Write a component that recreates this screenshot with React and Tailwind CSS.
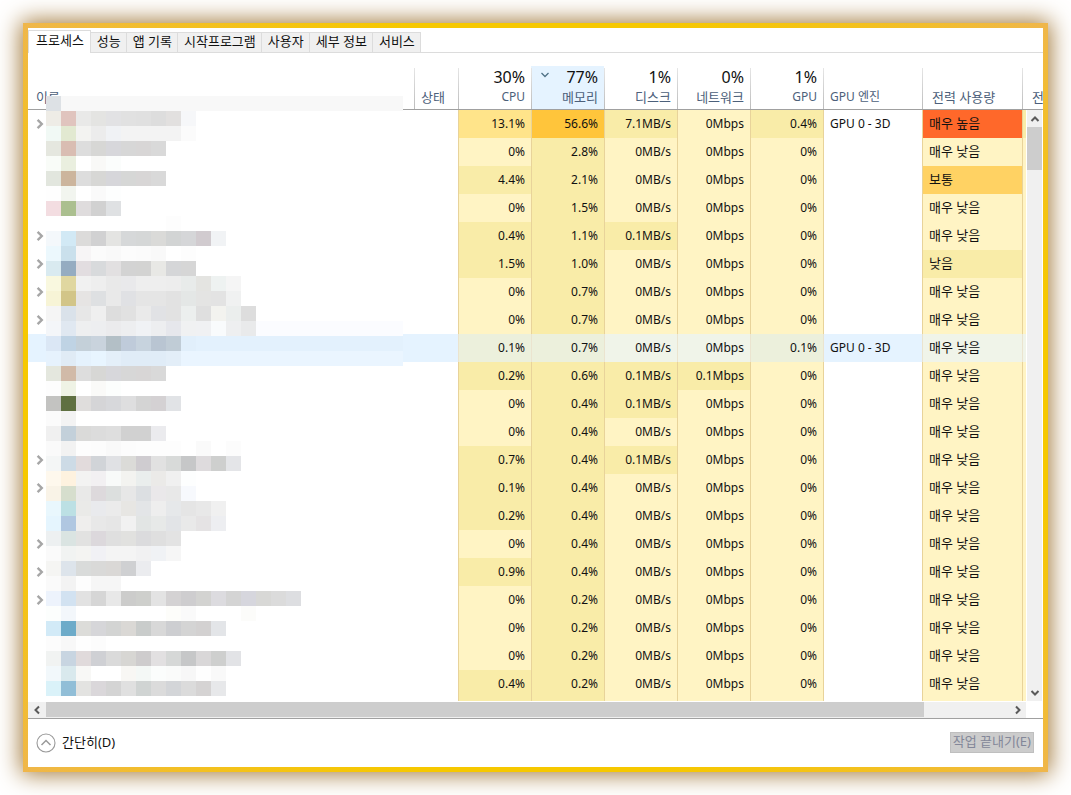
import React from "react";

const TABS = ["프로세스", "성능", "앱 기록", "시작프로그램", "사용자", "세부 정보", "서비스"];

const LEVEL = {
  0: "bg-[#fff4c4]",
  1: "bg-[#f9eca8]",
  2: "bg-[#ffe48a]",
  3: "bg-[#ffc53b]",
  4: "bg-[#ffd263]",
  5: "bg-[#ff682a]",
};
const SELECTED_LEVEL = { 0: "bg-[#f0f4e9]", 1: "bg-[#ecf0dc]" };

// cpu, memory, disk, network, gpu, engine, power, expandable
const ROWS = [
  ["13.1%", "56.6%", "7.1MB/s", "0Mbps", "0.4%", "GPU 0 - 3D", "매우 높음", true],
  ["0%", "2.8%", "0MB/s", "0Mbps", "0%", "", "매우 낮음", false],
  ["4.4%", "2.1%", "0MB/s", "0Mbps", "0%", "", "보통", false],
  ["0%", "1.5%", "0MB/s", "0Mbps", "0%", "", "매우 낮음", false],
  ["0.4%", "1.1%", "0.1MB/s", "0Mbps", "0%", "", "매우 낮음", true],
  ["1.5%", "1.0%", "0MB/s", "0Mbps", "0%", "", "낮음", true],
  ["0%", "0.7%", "0MB/s", "0Mbps", "0%", "", "매우 낮음", true],
  ["0%", "0.7%", "0MB/s", "0Mbps", "0%", "", "매우 낮음", true],
  ["0.1%", "0.7%", "0MB/s", "0Mbps", "0.1%", "GPU 0 - 3D", "매우 낮음", false],
  ["0.2%", "0.6%", "0.1MB/s", "0.1Mbps", "0%", "", "매우 낮음", false],
  ["0%", "0.4%", "0.1MB/s", "0Mbps", "0%", "", "매우 낮음", false],
  ["0%", "0.4%", "0MB/s", "0Mbps", "0%", "", "매우 낮음", false],
  ["0.7%", "0.4%", "0.1MB/s", "0Mbps", "0%", "", "매우 낮음", true],
  ["0.1%", "0.4%", "0MB/s", "0Mbps", "0%", "", "매우 낮음", true],
  ["0.2%", "0.4%", "0MB/s", "0Mbps", "0%", "", "매우 낮음", false],
  ["0%", "0.4%", "0MB/s", "0Mbps", "0%", "", "매우 낮음", true],
  ["0.9%", "0.4%", "0MB/s", "0Mbps", "0%", "", "매우 낮음", true],
  ["0%", "0.2%", "0MB/s", "0Mbps", "0%", "", "매우 낮음", true],
  ["0%", "0.2%", "0MB/s", "0Mbps", "0%", "", "매우 낮음", false],
  ["0%", "0.2%", "0MB/s", "0Mbps", "0%", "", "매우 낮음", false],
  ["0.4%", "0.2%", "0MB/s", "0Mbps", "0%", "", "매우 낮음", false],
];
const SELECTED = 8;

// Colours of the pixelated name column, one line per band of 15px blocks ("_" = clear)
const MOSAIC = [
  "dde1e5",
  "eeece6 e0c4be e9e9e8 e4e4e2 e2e2e4 e1e1e1 e0e0e0 dddddd e2e0df f6f7f9",
  "f1f9f5 e2e9d1 f3f3f1 ececec f0f2f5 f3f3f3 f3f3f3 f3f3f3 f3f3f3 fbfbfb",
  "e5e7df d9bdb2 dddddd d7d7d5 d7d7db d7d7d7 d8d6d6 d9d9d9",
  "f9fcf8 eaefdf ffffff f9f9f7 fbfdfc",
  "e2e6de ccb59d dddddd d7d7d5 d6d6da d6d7d6 d8d6d6 d9d9d9",
  "fefefe f2f5ef ffffff fafafa fdfefe",
  "f3dde1 abbf8f dfdcdd d1d1d1 dfe1e3",
  "_ _ _ _ _ _ _ _ fdfdfd",
  "f4f8fb d2e9f5 dcdbda d1d1d2 e4e4e2 d6d8d9 d5d7d7 dadad8 d2d4d4 d5d6d8 d1cbcf f1f3f5",
  "ecf8fd cae0ec f7f5f6 fbfbfb f9f9f9 fcfcfc fbfbfb f9f9f9 ffffff fdfdfd",
  "d9eaf0 95acc1 e2dde0 d8dadc e2e0e1 d3d3d3 d3d3d2 e8e8e5 d5d6d8 d6d6d6",
  "f9f8df e0d7a0 f1f1f1 eeeeee e9e9e9 e9e9eb eeeeee eeeeee ededed e8ebea e4e4e1 eef2f1 f5f5f5",
  "f7f4d6 d2c588 e6e4e3 dee0e2 e9e9e9 e0e1e4 e5e5e5 e5e5e5 e2e2e2 e4e7e6 e4e4e3 e3e3e3 f0f1f1",
  "f5f5f5 dae2ea e7e7e7 efefef dddddd e1e1e1 eaeaea e1e2e5 e2e2e2 ecefee dfdfdf f3f3ef ebeeed dddddd",
  "f4f6f9 e0e8f1 eeeff0 edeef0 ebebed edeef0 f0f2f5 edeef0 e6e7ec f0f1f2 f0f1f3 f9fbfc eeeff0 e9eaeb",
  "dbe7f5 bfd3e4 c4d0d9 c9d3dd b3bfc6 bfcbda c7d3de b9c5d2 c0ccd6 e1effb",
  "e6f2fd e0ebf5 e5f2fd e8f5ff e4eff9 e0ecf7 e0ecf7 e0ecf7 e3eef8",
  "e4e7de d1baa8 dddddd d7d7d5 d7d7db d7d7d7 d8d6d6 d9d9d9",
  "fdfdfd eff3e5 ffffff fafaf8 fcfefd",
  "c3c3c1 5f7041 dfdddc d5d5d7 d7d8db dededf d4d4d4 d4d1d3 e1e3e6",
  "fbfbfb f3f3f3",
  "f0f0f0 c3d0da dadad9 dcdcdc dedede d1d1d1 d1d1d1 ebebee",
  "fafafa f2f2f2 fdfdfd fcfcfc f9f9f9 fcfcfc fdfdfd fdfdfd fdfdfd _ fafafa _ fcfcfc",
  "f4f6f6 cddbe6 e2dbdc d1d4d8 e0e1e4 dbdbd8 cfccd0 e1e1e1 d8dad9 c6c7c8 dedbdd cecfce e4e5e8",
  "fef8ed fef2df f3f3f2 f2f0f2 f8faf9 f3f3f0 eaeeed ebeae8 f0f0f0 fdfefe",
  "f9f3e7 d6decd e9e9e8 ddd9dc dcdfde e7e7e7 dcdfe2 eae8ea e8e8e8 f7f9fd",
  "e9f7fd bce0e4 eaeae8 e9eaed ebebeb e7e6e3 e3e5e7 eeeeee e6e8ea e5e5e5 e8e8e8 f0f0f0",
  "e5f5fe b0c7e1 efeeed e8e8e8 e6e6e6 f1f1f1 e2e5e4 e7e9e8 e2e4e7 e9e9e9 e5e3e4 edeef1",
  "edf0f1 dae4e2 e2e2e1 dcd8dc dfdfdf e1e1df dbdbdd dfdfdf e3e3e3",
  "fafafa f1f3f2 f4f4f2 f1f1f5 f4f4f4 f4f4f4 f1f1f2 f0f2f5 f6f6f6",
  "f5f5f3 dde4eb d9dbda d9d9d8 dad8d6 cfd0d2 ebecef",
  "fafafa f3f3f3 fdfdfd f6f6f6 f6f6f6",
  "edf3fc d2e2f1 e2e2e2 d6d6d6 e8e8e8 cccccb cecfcc e3e3e3 d4d2d3 cecdcf d3d3d1 dcdbdf d4d4d4 d6d6dd d8d8d6 dbdbdb dddee1",
  "fcfefd f3f7fb _ _ _ _ _ _ fdfdfa fafafa _ _ _ fcfcfa",
  "d2eaf7 6dabc9 dcdcd9 d6d6d9 d3d4d3 dad8d5 c9cccb d8d8d8 cdced1 d4d4d4 d3d1d1 e3e5e8",
  "fcfcfc f8f8f8 fefefe fcfcfc",
  "f1f3f2 c8d5e1 e0dadb cfd0d4 dadada d7d6d3 cecccd e2e0e1 d6d8d7 c6c7c8 d9d7d8 cecfce e2e3e6",
  "f2f8fb d9e9ed f8f8f6 _ _ f8f7f4 f4f8f6 fbfdfc fafbfa f7f7f7 fefefe f9f9f9",
  "daf2f9 91bed7 e3e3e1 dad7da d4d4d4 e0e0e0 d0d4d3 dbdbdb d3d5d8 dbdbdb d5d3d3 e7e8ea",
];
// Bands that are tinted across the whole column
const BAND_FILL = { 0: "#f8f8f8", 15: "#fbfcff", 16: "#e3f1fd", 17: "#eaf5ff" };

function Mosaic() {
  return (
    <svg
      aria-hidden="true"
      width="357"
      height="600"
      shapeRendering="crispEdges"
      className="pointer-events-none absolute left-[18px] top-[30px]"
    >
      {MOSAIC.map((line, y) => (
        <g key={y}>
          <rect x="0" y={y * 15} width="357" height="15" fill={BAND_FILL[y] || "none"} />
          {line.split(" ").map((c, x) =>
            c === "_" ? null : (
              <rect key={x} x={x * 15} y={y * 15} width="15" height="15" fill={"#" + c} />
            )
          )}
        </g>
      ))}
    </svg>
  );
}

function Arrow({ d, className, stroke = "2", size = "10" }) {
  return (
    <svg viewBox="0 0 10 10" width={size} height={size} fill="none" stroke="currentColor" strokeWidth={stroke} className={className}>
      <path d={d} />
    </svg>
  );
}
const RIGHT = "M3 1.5 6.5 5 3 8.5";
const LEFT = "M7 1.5 3.5 5 7 8.5";
const UP = "M1.5 7 5 3.5 8.5 7";
const DOWN = "M1.5 3 5 6.5 8.5 3";

function loadLevel(value, column, row) {
  if (row === 0 && column === 0) return 2;
  if (row === 0 && column === 1) return 3;
  return column === 1 || parseFloat(value) > 0 ? 1 : 0;
}
function powerLevel(value) {
  return { "매우 높음": 5, 보통: 4, 낮음: 1 }[value] || 0;
}

const HEAD = "relative h-11 border-b border-b-[#a0a0a0] p-0 pb-[3px] align-bottom font-normal";
const LINE = "absolute bottom-0 left-0 top-0.5 w-px bg-linear-to-b from-[#e6e6e6] to-[#bcbcbc]";

// Latin labels are set one step smaller than Hangul ones
function labelSize(label) {
  return /[A-Z]/.test(label) ? "text-[12px]" : "text-[13px]";
}

function LoadHead({ total, label, sorted }) {
  return (
    <th scope="col" aria-sort={sorted ? "descending" : undefined} className={`${HEAD} ${sorted ? "bg-[#e5f3ff]" : ""}`}>
      <span className={LINE} />
      <button type="button" className="flex w-full flex-col items-end pr-1.5">
        <span className="flex w-full items-center justify-between pl-[9px]">
          {sorted ? <Arrow d={DOWN} stroke="1.3" className="mb-1 text-[#4f7186]" /> : <span />}
          <span className="text-base leading-[22px]">{total}</span>
        </span>
        <span className={`${labelSize(label)} leading-[18px] text-[#4c607a]`}>{label}</span>
      </button>
    </th>
  );
}

function TextHead({ label, pad, first }) {
  return (
    <th scope="col" className={`${HEAD} text-left`}>
      {first ? null : <span className={LINE} />}
      <button type="button" className={`${pad} ${labelSize(label)} block whitespace-nowrap leading-[18px] text-[#4c607a]`}>
        {label}
      </button>
    </th>
  );
}

const CELL = "h-7 border-l p-0";
const EDGE = "border-l-[#e8d39a]";
const EDGE_SELECTED = "border-l-[#ebe4cf]";

function ProcessRow({ row, index }) {
  const selected = index === SELECTED;
  const shades = selected ? SELECTED_LEVEL : LEVEL;
  const edge = selected ? EDGE_SELECTED : EDGE;
  return (
    <tr className={selected ? "bg-[#e5f3ff]" : ""}>
      <td className="h-7 p-0">
        {row[7] ? (
          <button type="button" aria-label="확장" className="ml-1.5 block text-[#a6a6a6]">
            <Arrow d={RIGHT} size="12" />
          </button>
        ) : null}
      </td>
      <td className="h-7 p-0" />
      {row.slice(0, 5).map((value, c) => (
        <td key={c} className={`${CELL} ${edge} pr-1.5 text-right ${shades[loadLevel(value, c, index)]}`}>
          {value}
        </td>
      ))}
      <td className={`${CELL} ${edge} whitespace-nowrap pl-1.5`}>{row[5]}</td>
      <td className={`${CELL} ${edge} whitespace-nowrap pb-0.5 pl-1.5 text-[13px] ${shades[powerLevel(row[6])]}`}>{row[6]}</td>
      <td className={`${CELL} ${edge} ${shades[index === 0 ? 1 : 0]}`} />
    </tr>
  );
}

function ProcessTable() {
  return (
    <div className="relative mt-[13px] overflow-hidden">
      <table className="w-full table-fixed border-separate border-spacing-0 text-[12px] leading-4">
        <colgroup>
          <col />
          <col className="w-11" />
          <col className="w-[73px]" />
          <col className="w-[73px]" />
          <col className="w-[73px]" />
          <col className="w-[73px]" />
          <col className="w-[73px]" />
          <col className="w-[99px]" />
          <col className="w-[100px]" />
          <col className="w-[21px]" />
        </colgroup>
        <thead>
          <tr>
            <TextHead label="이름" pad="pl-2" first />
            <TextHead label="상태" pad="pl-[7px]" />
            <LoadHead total="30%" label="CPU" />
            <LoadHead total="77%" label="메모리" sorted />
            <LoadHead total="1%" label="디스크" />
            <LoadHead total="0%" label="네트워크" />
            <LoadHead total="1%" label="GPU" />
            <TextHead label="GPU 엔진" pad="pl-[7px]" />
            <TextHead label="전력 사용량" pad="pl-2.5" />
            <TextHead label="전" pad="pl-2.5" />
          </tr>
        </thead>
        <tbody>
          {ROWS.map((row, i) => (
            <ProcessRow key={i} row={row} index={i} />
          ))}
          <tr aria-hidden="true">
            <td className="h-[3px] p-0" />
            <td className="h-[3px] p-0" />
            {[1, 1, 0, 0, 0].map((level, i) => (
              <td key={i} className={`h-[3px] border-l p-0 ${EDGE} ${LEVEL[level]}`} />
            ))}
            <td className={`h-[3px] border-l p-0 ${EDGE}`} />
            <td className={`h-[3px] border-l p-0 ${EDGE} ${LEVEL[0]}`} />
            <td className={`h-[3px] border-l p-0 ${EDGE} ${LEVEL[0]}`} />
          </tr>
        </tbody>
      </table>
      <Mosaic />
      <div className="absolute bottom-0 right-0 top-11 flex w-[17px] flex-col border-x border-white bg-[#f0f0f0] text-[#5a5a5a]">
        <button type="button" aria-label="위로" className="flex h-[17px] items-center justify-center">
          <Arrow d={UP} />
        </button>
        <div className="h-[43px] bg-[#cdcdcd]" />
        <button type="button" aria-label="아래로" className="mt-auto flex h-[17px] items-center justify-center">
          <Arrow d={DOWN} />
        </button>
      </div>
    </div>
  );
}

export default function App() {
  return (
    <div className="flex min-h-screen bg-white p-[23px] font-['Noto_Sans','Noto_Sans_CJK_KR',sans-serif] text-[13px] text-[#111]">
      <div className="flex flex-1 bg-[radial-gradient(ellipse,#f6c800_72%,#efb64c_100%)] p-[5px] shadow-[0_0_22px_2px_#a07636]">
        <main className="flex min-w-0 flex-1 flex-col bg-white">
          <nav role="tablist" className="flex h-[25px] items-end pt-0.5">
            {TABS.map((tab, i) =>
              i === 0 ? (
                <button
                  key={tab}
                  type="button"
                  role="tab"
                  aria-selected="true"
                  className="h-full border-x border-t border-[#dcdcdc] pb-1 pl-[7px] pr-1.5 leading-[18px]"
                >
                  {tab}
                </button>
              ) : (
                <button
                  key={tab}
                  type="button"
                  role="tab"
                  aria-selected="false"
                  className="h-[21px] border-y border-r border-[#dcdcdc] bg-[#f0f0f0] pb-0.5 pl-1.5 pr-[5px] leading-[17px]"
                >
                  {tab}
                </button>
              )
            )}
            <span className="flex-1 border-b border-[#dcdcdc]" />
          </nav>

          <ProcessTable />

          <div className="mr-[17px] mt-px flex h-4 items-stretch bg-[#f0f0f0] text-[#5a5a5a]">
            <button type="button" aria-label="왼쪽으로" className="flex w-[18px] items-center justify-center">
              <Arrow d={LEFT} />
            </button>
            <div className="mb-px mr-[85px] flex-1 bg-[#cdcdcd]" />
            <button type="button" aria-label="오른쪽으로" className="flex w-[17px] items-center justify-center">
              <Arrow d={RIGHT} />
            </button>
          </div>

          <footer className="flex flex-1 items-center justify-between border-t border-[#a0a0a0] pb-px pl-2 pr-[9px]">
            <button type="button" className="flex items-center gap-1.5">
              <svg viewBox="0 0 20 20" width="20" height="20" fill="none" stroke="#9a9a9a">
                <circle cx="10" cy="10" r="9" strokeWidth="1.1" />
                <path d="M5.5 12 10 7.5l4.5 4.5" strokeWidth="1.5" />
              </svg>
              간단히(D)
            </button>
            <button type="button" disabled className="h-[21px] border border-[#bfbfbf] bg-[#cccccc] px-0.5 pb-0.5 leading-[17px] text-[#838799]">
              작업 끝내기(E)
            </button>
          </footer>
        </main>
      </div>
    </div>
  );
}
